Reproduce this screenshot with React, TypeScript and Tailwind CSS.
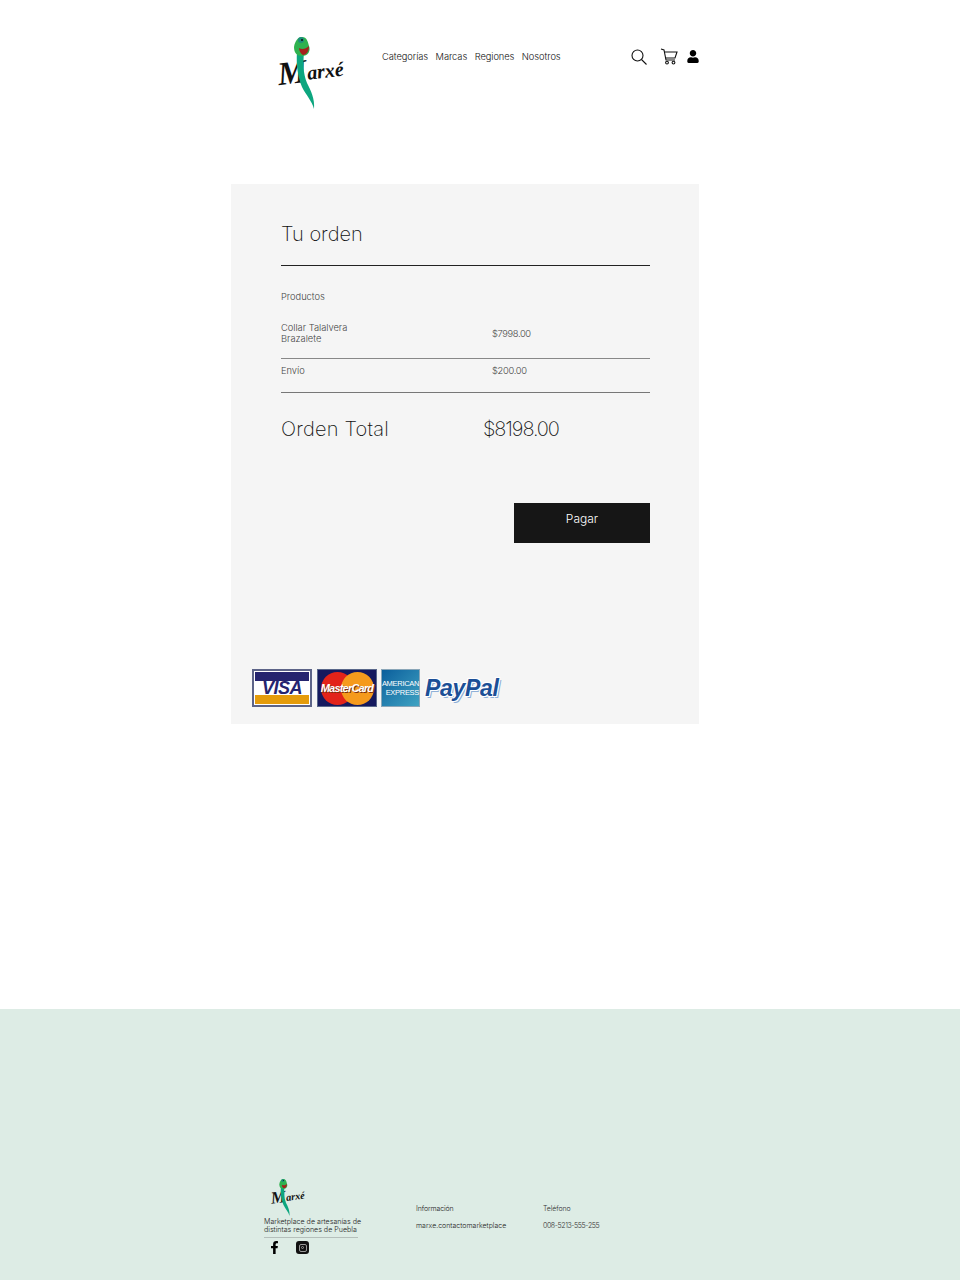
import { FaFacebookF, FaUser } from 'react-icons/fa';

function Logo({ className }: { className: string }) {
  return (
    <svg viewBox="0 0 70 76" className={className}>
      <text
        x="2"
        y="47"
        fill="#111"
        fontFamily="'Liberation Serif', serif"
        fontStyle="italic"
        fontWeight="700"
        fontSize="20"
        transform="rotate(-7 30 40)"
      >
        <tspan fontSize="33">M</tspan>
        <tspan dx="0" dy="-2">arxé</tspan>
      </text>
      <path d="M21 17 C20 30 22 42 26 52 C30 60 36 66 38 74 C39 64 35 56 31 48 C27 38 27 28 28 18 Z" fill="#0da67f" />
      <path d="M18 12 C19 6 22 2 26 2 C31 2 32 7 33 11 C35 16 32 21 26 21 C21 21 18 18 18 12 Z" fill="#2fb24f" />
      <circle cx="25" cy="5" r="3" fill="#1d8f7a" />
      <circle cx="26" cy="5" r="1" fill="#111" />
      <path d="M23 13 C26 15 30 14 33 11 C33 17 30 20 27 20 C25 19 23 16 23 13 Z" fill="#a5201c" />
    </svg>
  );
}

function SearchIcon() {
  return (
    <svg viewBox="0 0 16 16" className="w-[16px] h-[16px]" fill="none" stroke="#111" strokeWidth="1.1">
      <circle cx="6.5" cy="6.5" r="5.5" />
      <path d="M10.5 10.5 L15.5 15.5" />
    </svg>
  );
}

function CartIcon() {
  return (
    <svg viewBox="0 0 18 17" className="ml-[13px] w-[18px] h-[17px]" fill="none" stroke="#111" strokeWidth="1.1">
      <path d="M1 1 L4 2 L6 12 L15 12" />
      <path d="M4.3 4 L17 4 L15 10 L5.5 10" />
      <circle cx="7" cy="14.6" r="1.4" />
      <circle cx="13.5" cy="14.6" r="1.4" />
    </svg>
  );
}

function Cards() {
  return (
    <div className="flex items-center">
      <div className="w-[60px] h-[38px] border-2 border-[#5d6488] bg-white flex flex-col justify-between p-[1px]">
        <div className="h-[10px] bg-[#25246f]" />
        <div className="text-center text-[18px] leading-[14px] font-bold italic tracking-[-0.5px] text-[#25246f] font-['Liberation_Sans',sans-serif]">VISA</div>
        <div className="h-[10px] bg-[#e59c0b]" />
      </div>
      <div className="relative ml-[5px] w-[60px] h-[38px] bg-[#15195e] border border-[#59678a] overflow-hidden">
        <div className="absolute left-[3px] top-[2px] w-[33px] h-[33px] rounded-full bg-[#e2231a]" />
        <div className="absolute left-[23px] top-[2px] w-[33px] h-[33px] rounded-full bg-[#f59a1c]" />
        <div className="absolute inset-0 flex items-center justify-center text-[11px] tracking-[-0.8px] font-bold italic text-white [text-shadow:1px_1px_0_#7a3010] font-['Liberation_Sans',sans-serif]">MasterCard</div>
      </div>
      <div className="ml-[4px] w-[39px] h-[38px] border border-[#8aa6b8] bg-gradient-to-br from-[#0a5f9c] to-[#3fa3c2] flex flex-col items-center justify-center text-[7.5px] leading-[9px] tracking-[-0.3px] text-white font-['Liberation_Sans',sans-serif]">
        <span>AMERICAN</span>
        <span className="self-end">EXPRESS</span>
      </div>
      <div className="ml-[5px] text-[23px] leading-none tracking-[-0.3px] font-bold italic text-[#1c4f96] [text-shadow:1px_1px_0_#fff,-1px_-1px_0_#fff,1px_-1px_0_#fff,-1px_1px_0_#fff,2px_2px_0_#8fb0d8] font-['Liberation_Sans',sans-serif]">PayPal</div>
    </div>
  );
}

export default function App() {
  return (
    <div className="min-h-[1280px] w-[960px] bg-white flex flex-col font-['Inter',sans-serif] font-light text-[#222]">
      <header className="h-[184px] pl-[276px] pr-[261px] pt-[35px] flex items-start">
        <Logo className="w-[70px] h-[76px] shrink-0" />
        <nav className="ml-[36px] mt-[15px] flex gap-[7.5px] text-[9.3px] leading-[13px] tracking-[-0.05px] text-[#111]">
          <span>Categorías</span>
          <span>Marcas</span>
          <span>Regiones</span>
          <span>Nosotros</span>
        </nav>
        <div className="ml-auto mt-[13px] flex items-center text-black">
          <SearchIcon />
          <CartIcon />
          <FaUser className="ml-[9px] w-[12px] h-[13px]" />
        </div>
      </header>

      <main className="ml-[231px] w-[468px] h-[540px] bg-[#f5f5f5] flex flex-col">
        <div className="px-[50px] pr-[49px] flex flex-col">
          <h1 className="mt-[37px] text-[20px] leading-[26px] font-extralight text-[#111]">Tu orden</h1>
          <div className="mt-[18px] h-px bg-[#222]" />
          <p className="mt-[25px] text-[9.3px] leading-[11px] text-[#444]">Productos</p>
          <div className="mt-[20px] flex items-center text-[9.3px] leading-[11px] text-[#444]">
            <div className="w-[211px]">
              <div>Collar Talalvera</div>
              <div>Brazalete</div>
            </div>
            <span className="tracking-[-0.35px]">$7998.00</span>
          </div>
          <div className="mt-[14px] h-px bg-[#888]" />
          <div className="mt-[6px] flex text-[9.3px] leading-[11px] text-[#444]">
            <span className="w-[211px]">Envío</span>
            <span className="tracking-[-0.3px]">$200.00</span>
          </div>
          <div className="mt-[16px] h-px bg-[#777]" />
          <div className="mt-[23px] flex text-[20px] leading-[26px] font-extralight text-[#111]">
            <span className="w-[202px] tracking-[0.2px]">Orden Total</span>
            <span className="tracking-[-1.1px]">$8198.00</span>
          </div>
          <div className="mt-[61px] self-end w-[136px] h-[40px] bg-[#161616] text-white text-center text-[12px] leading-[16px] pt-[8px]">Pagar</div>
        </div>
        <div className="mt-auto mb-[17px] ml-[21px]">
          <Cards />
        </div>
      </main>

      <footer className="mt-auto h-[271px] bg-[#ddece5] pl-[264px] pt-[169px] flex items-start">
        <div className="w-[152px]">
          <Logo className="ml-[6px] w-[36px] h-[39px]" />
          <p className="text-[7.1px] leading-[8px] mt-[1px] text-[#222]">Marketplace de artesanías de<br />distintas regiones de Puebla</p>
          <div className="mt-[3px] w-[94px] h-px bg-[#b5bfbb]" />
          <div className="mt-[3px] flex items-center pl-[6px] text-black">
            <FaFacebookF className="w-[9px] h-[13px]" />
            <div className="ml-[17px] w-[13px] h-[13px] rounded-[3px] bg-[#111] flex items-center justify-center">
              <div className="w-[8px] h-[8px] rounded-[2px] border border-[#999] flex items-center justify-center">
                <div className="w-[3px] h-[3px] rounded-full border border-[#999]" />
              </div>
            </div>
          </div>
        </div>
        <div className="mt-[26px] w-[127px] text-[7px] leading-[9px]">
          <p className="tracking-[-0.1px]">Información</p>
          <p className="mt-[8px]">marxe.contactomarketplace</p>
        </div>
        <div className="mt-[26px] text-[7px] leading-[9px] text-[#333]">
          <p className="tracking-[-0.1px]">Teléfono</p>
          <p className="mt-[8px] tracking-[-0.4px]">008-5213-555-255</p>
        </div>
      </footer>
    </div>
  );
}
